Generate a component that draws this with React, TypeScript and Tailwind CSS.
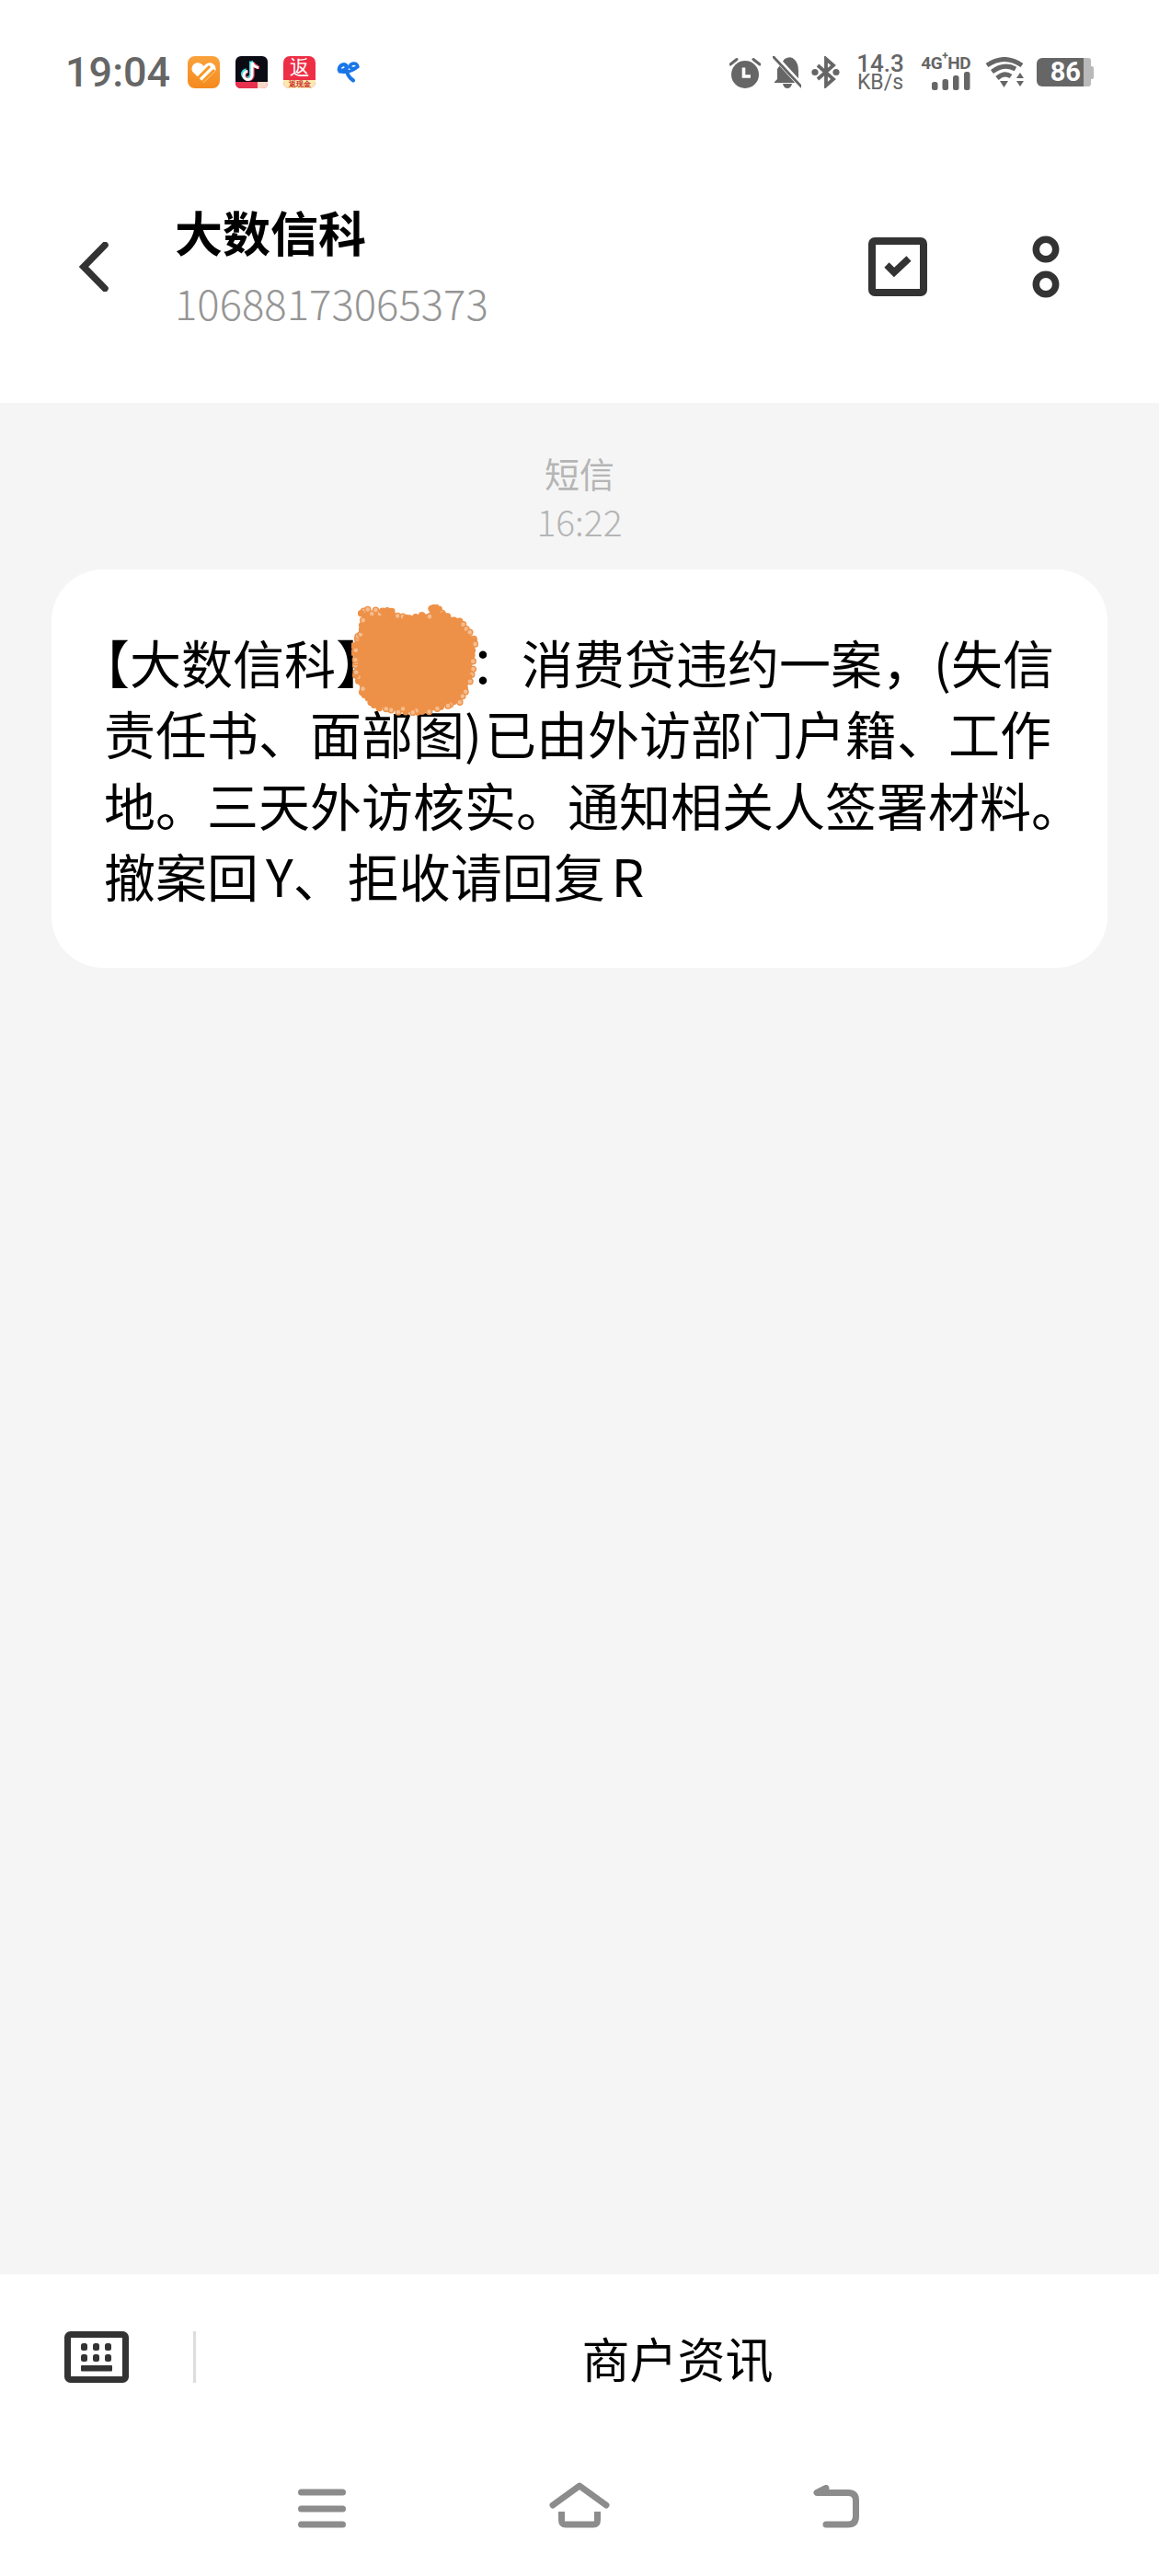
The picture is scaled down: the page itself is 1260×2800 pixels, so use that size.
const F = '"Noto Sans CJK SC", "Liberation Sans", sans-serif';
const R = 'Roboto, "Liberation Sans", sans-serif';

const BLOB: [number, number][] = [
  [12, 7], [40, 9], [70, 14], [84, 11], [92, 3], [102, 11], [118, 20], [134, 40], [131, 63], [127, 85],
  [117, 105], [79, 117], [50, 115], [22, 108], [8, 85], [3, 63], [5, 35], [13, 25],
];

function blobRings() {
  const out: { x: number; y: number; k: number }[] = [];
  BLOB.forEach(([x, y], i) => {
    const [nx, ny] = BLOB[(i + 1) % BLOB.length];
    const steps = Math.max(2, Math.round(Math.hypot(nx - x, ny - y) / 5));
    for (let s = 0; s < steps; s++) {
      const t = s / steps;
      const seed = Math.sin((i + 1) * 12.9 + s * 78.2) * 43758.5;
      const r = seed - Math.floor(seed);
      out.push({ x: x + (nx - x) * t + (r - 0.5) * 5, y: y + (ny - y) * t + (r * 7 % 1 - 0.5) * 5, k: r });
    }
  });
  return out;
}

function Blob() {
  const pts = BLOB.map((p) => p.join(',')).join(' ');
  return (
    <svg className="absolute left-[326px] top-[38px]" width="138" height="122" viewBox="0 0 138 122">
      <polygon points={pts} fill="#ee9148" stroke="#ee9148" strokeWidth="2" />
      {blobRings().map((c, i) => (
        <circle key={i} cx={c.x} cy={c.y} r="3" fill={c.k > 0.5 ? '#f5bd8f' : '#ee9148'} stroke="#ee9148" strokeWidth="1.4" />
      ))}
    </svg>
  );
}

function OrangeApp() {
  return (
    <svg width="35" height="35" viewBox="0 0 35 35">
      <defs>
        <linearGradient id="og" x1="0" y1="0" x2="0" y2="1">
          <stop offset="0" stopColor="#f9a23c" />
          <stop offset="1" stopColor="#f58a1f" />
        </linearGradient>
      </defs>
      <rect width="35" height="35" rx="8" fill="url(#og)" />
      <path d="M17.5 29 L5 16.5 Q3 10 9 7.5 Q14 6.5 17.5 11 Q21 6.5 26 7.5 Q32 10 30 16.5Z" fill="#fff" />
      <path d="M11 24 L24 11 M16 28 L29 15" stroke="#f7981f" strokeWidth="3" fill="none" />
    </svg>
  );
}

function TikTokApp() {
  const note = 'M18 7 V21 A4.5 4.5 0 1 1 13 16.5 M18 7 Q20 12 25 12.5';
  return (
    <svg width="35" height="35" viewBox="0 0 35 35">
      <rect width="35" height="35" rx="6" fill="#0b0b14" />
      <path d="M0 28 H35 V29 Q35 35 29 35 H6 Q0 35 0 29Z" fill="#e8304f" />
      <path d="M24 28 H35 V29 Q35 35 29 35 H24Z" fill="#f7d7c8" />
      <g transform="translate(-1.2 -1.5)" fill="none" stroke="#3fdde0" strokeWidth="3.6"><path d={note} /></g>
      <g transform="translate(1 0)" fill="none" stroke="#f0345a" strokeWidth="3.6"><path d={note} /></g>
      <g fill="none" stroke="#fff" strokeWidth="3"><path d={note} /></g>
    </svg>
  );
}

function FanliApp() {
  return (
    <div className="flex h-[35px] w-[35px] flex-col overflow-hidden rounded-[7px] bg-[#ee2e45]">
      <div className="flex h-[26px] items-center justify-center text-[22px] font-normal leading-[26px] text-white">返</div>
      <div className="flex h-[9px] items-center justify-center bg-[#fbe9b0] text-[8px] font-bold leading-[9px] text-[#c9302a]">返现金</div>
    </div>
  );
}

function TelecomApp() {
  return (
    <svg width="25" height="23" viewBox="0 0 25 23" fill="none" stroke="#1a76e8" strokeLinecap="round">
      <path d="M2.5 9 Q3 3.5 8 3 Q11.5 3.5 11 7 Q8 10.5 4 9" strokeWidth="3.8" />
      <path d="M23 5.5 Q22 1.5 18 2 Q14 3 14.5 6 Q17 8.5 21 6.5" strokeWidth="3.4" />
      <path d="M10.5 5 Q10 15 18 20.5" strokeWidth="4" />
      <path d="M3 11 Q14 13 22.5 6" strokeWidth="3" />
    </svg>
  );
}

function Alarm() {
  return (
    <svg width="34" height="35" viewBox="0 0 34 35" fill="#666666">
      <circle cx="17" cy="20" r="15" />
      <path d="M1 9 L8 3.5 M33 9 L26 3.5" stroke="#666666" strokeWidth="3" strokeLinecap="round" />
      <path d="M15.5 12.5 V22 H23" stroke="#fff" strokeWidth="3.6" fill="none" />
    </svg>
  );
}

function BellOff() {
  return (
    <svg width="31" height="35" viewBox="0 0 31 35">
      <path d="M13 3 Q20 -1 24 4 Q28 8 28 16 V25 L31 28 V29 H2 V28 L5 25 V14Z" fill="#666666" />
      <path d="M11 30 H21 Q20 35 16 35 Q12 35 11 30Z" fill="#666666" />
      <path d="M-1 -3 L32 33" stroke="#fff" strokeWidth="6" />
      <path d="M1 1 L31 33" stroke="#666666" strokeWidth="2.8" strokeLinecap="round" />
    </svg>
  );
}

function Bluetooth() {
  return (
    <svg width="31" height="35" viewBox="0 0 31 35" fill="none" stroke="#666666" strokeWidth="3.8">
      <path d="M7 10 L24 25 L16 32 V3 L24 10 L7 25" strokeLinejoin="miter" />
      <circle cx="4" cy="17.5" r="3.6" fill="#666666" stroke="none" />
      <circle cx="27" cy="17.5" r="3.6" fill="#666666" stroke="none" />
    </svg>
  );
}

function Signal() {
  return (
    <svg width="42" height="20" viewBox="0 0 42 20" fill="#666666">
      <rect x="0" y="11" width="6.5" height="9" rx="2.5" />
      <rect x="11.5" y="8" width="6.5" height="12" rx="2.5" />
      <rect x="23" y="4" width="6.5" height="16" rx="2.5" />
      <rect x="35" y="0" width="6.5" height="20" rx="2.5" />
    </svg>
  );
}

function Wifi() {
  return (
    <svg width="42" height="33" viewBox="0 0 42 33" fill="none" stroke="#666666" strokeWidth="5">
      <path d="M2 9 Q21 -4 40 9" />
      <path d="M7.5 16 Q21 6 33 13" />
      <path d="M13 23 Q21 16 28 21" />
      <path d="M16 26 H25 L20.5 33Z" fill="#666666" stroke="none" />
      <path d="M34 23 H42 L38 17Z M34 26 H42 L38 32Z" fill="#666666" stroke="none" />
    </svg>
  );
}

function Battery() {
  return (
    <div className="flex h-[31px] w-[64px] items-center">
      <div className="flex h-[31px] w-[51px] items-center justify-end rounded-l-[6px] bg-[#666666] pr-[3px] text-[29px] font-bold leading-[31px] text-white" style={{ fontFamily: R }}>
        86
      </div>
      <div className="h-[31px] w-[8px] rounded-r-[3px] bg-[#b9b9b9]" />
      <div className="h-[14px] w-[3px] rounded-r-[2px] bg-[#b9b9b9]" />
    </div>
  );
}

function StatusBar() {
  return (
    <div className="mt-[59px] flex h-[39px] items-center justify-between pl-[71px] pr-[69px] text-[#666666]" style={{ fontFamily: R }}>
      <div className="flex items-center">
        <span className="w-[112px] whitespace-nowrap text-[45px] font-medium leading-[39px]">19:04</span>
        <div className="ml-[21px] flex items-center gap-[17px]">
          <OrangeApp />
          <TikTokApp />
          <FanliApp />
          <div className="ml-[6px]"><TelecomApp /></div>
        </div>
      </div>
      <div className="flex items-center">
        <Alarm />
        <div className="ml-[13px]"><BellOff /></div>
        <div className="ml-[11px]"><Bluetooth /></div>
        <div className="ml-[19px] flex w-[50px] flex-col items-center">
          <span className="text-[26px] font-medium leading-[22px]">14.3</span>
          <span className="text-[23px] leading-[20px]">KB/s</span>
        </div>
        <div className="ml-[17px] flex w-[56px] flex-col items-end">
          <span className="whitespace-nowrap text-[19px] font-bold leading-[18px] tracking-[-0.5px]">4G<sup className="text-[12px] leading-[0] align-[4px]">+</sup>HD</span>
          <Signal />
        </div>
        <div className="ml-[16px]"><Wifi /></div>
        <div className="ml-[14px]"><Battery /></div>
      </div>
    </div>
  );
}

function Header() {
  return (
    <div className="mt-[124px] flex h-[136px] items-center pl-[86px]">
      <svg width="32" height="54" viewBox="0 0 32 54" fill="none" stroke="#333333" strokeWidth="7.5" strokeLinecap="round" strokeLinejoin="miter">
        <path d="M28 3.5 L5 27 L28 50.5" />
      </svg>
      <div className="ml-[72px] flex flex-col self-start">
        <div className="text-[52px] font-bold leading-[60px] text-black">大数信科</div>
        <div className="mt-[22px] text-[45.5px] font-light leading-[48px] text-[#959595]">10688173065373</div>
      </div>
      <svg className="ml-auto" width="64" height="64" viewBox="0 0 64 64" fill="none" stroke="#333333">
        <rect x="4" y="4" width="56" height="56" rx="3" strokeWidth="8" />
        <path d="M20 30 L28 38 L44 23" strokeWidth="7.5" />
      </svg>
      <svg className="ml-[114px] mr-[108px]" width="30" height="68" viewBox="0 0 30 68" fill="none" stroke="#333333" strokeWidth="7.5">
        <circle cx="15" cy="15" r="10.7" />
        <circle cx="15" cy="53" r="10.7" />
      </svg>
    </div>
  );
}

function Keyboard() {
  return (
    <svg width="70" height="56" viewBox="0 0 70 56" fill="#333333">
      <rect x="3.5" y="3.5" width="63" height="49" rx="3" fill="none" stroke="#333333" strokeWidth="7" />
      {[18, 31, 44].map((x) => (
        <g key={x}>
          <rect x={x} y="13" width="7" height="8" rx="2.5" />
          <rect x={x} y="25" width="7" height="8" rx="2.5" />
        </g>
      ))}
      <rect x="18" y="37" width="34" height="6.5" rx="1" />
    </svg>
  );
}

function Nav() {
  return (
    <div className="flex h-[140px] items-start gap-[221px] pl-[324px] pt-[38px]">
      <svg className="mt-[7px]" width="52" height="43" viewBox="0 0 52 43" stroke="#8c8c8c" strokeWidth="7" strokeLinecap="round">
        <path d="M3.5 4 H48.5 M3.5 22 H48.5 M3.5 39 H48.5" />
      </svg>
      <svg width="66" height="50" viewBox="0 0 66 50" fill="none" stroke="#8c8c8c" strokeWidth="7" strokeLinecap="round" strokeLinejoin="round">
        <path d="M4 25 L33 4 L62 25" />
        <path d="M13.5 32 V41 Q13.5 46 18 46 H48 Q52.5 46 52.5 41 V32" strokeLinecap="butt" />
      </svg>
      <svg className="mt-[3px]" width="50" height="47" viewBox="0 0 50 47" fill="none" stroke="#8c8c8c" strokeWidth="7" strokeLinecap="round" strokeLinejoin="round">
        <path d="M14 3.5 L4 8.5 H38 Q46.5 8.5 46.5 17 V34 Q46.5 43 38 43 H14" />
      </svg>
    </div>
  );
}

function App() {
  return (
    <div className="flex h-[2800px] w-[1260px] flex-col bg-white" style={{ fontFamily: F }}>
      <div className="h-[438px]">
        <StatusBar />
        <Header />
      </div>

      <div className="flex flex-1 flex-col items-center bg-[#f5f5f5] pt-[50px]">
        <div className="text-[38px] leading-[52px] text-[#b5b5b5]">短信</div>
        <div className="text-[39px] font-light leading-[52px] text-[#b5b5b5]">16:22</div>
        <div className="relative mt-[27px] h-[433px] w-[1148px] rounded-[56px] bg-white pl-[57px] pr-[20px] pt-[61px] text-[56px] leading-[77.4px] text-black">
          <span className="[font-feature-settings:'halt']">【</span>大数信科<span className="[font-feature-settings:'halt']">】</span>
          <span className="inline-block w-[118px]" />：消费贷违约一案，(失信<br />
          责任书、面部图)<span className="ml-[3px]">已由外访部门户籍、工作</span><br />
          地。三天外访核实。通知相关人签署材料。<br />
          撤案回<span className="ml-[8px]">Y</span>、<span className="ml-[3px]">拒收请回复</span><span className="ml-[7px]">R</span>
          <Blob />
        </div>
      </div>

      <div className="flex h-[188px] items-start pl-[70px] pt-[62px]">
        <Keyboard />
        <div className="ml-[70px] h-[56px] w-[3px] bg-[#dddddd]" />
        <div className="flex-1 text-center text-[52px] leading-[58px] text-black">商户资讯</div>
      </div>
      <Nav />
    </div>
  );
}

export default App;
